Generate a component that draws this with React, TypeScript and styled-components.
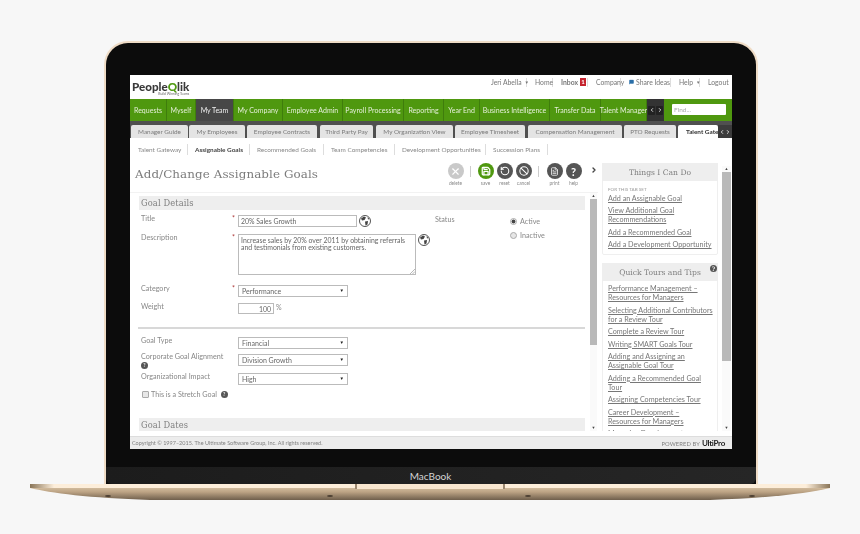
import React from "react";
import styled, { createGlobalStyle } from "styled-components";
import { X, RotateCcw, Ban, FileText, ChevronRight, ChevronLeft, MessageSquare, Save } from "lucide-react";

const Global = createGlobalStyle`
  html, body { margin: 0; padding: 0; background: #f7f7f7; }
  body { font-family: "Lato", "Open Sans", sans-serif; }
  * { box-sizing: border-box; }
`;

const Page = styled.div`
  width: 860px; height: 534px; overflow: hidden; background: #f7f7f7;
  display: flex; flex-direction: column; align-items: center; padding-top: 41px;
`;
const Lid = styled.div`
  width: 654px; height: 443px; margin-left: 1px; background: #0c0c0c;
  border: 2px solid #efdcc6; border-bottom: 0; border-radius: 24px 24px 0 0;
  display: flex; flex-direction: column; align-items: center; padding-top: 32px;
`;
const Screen = styled.div`
  width: 602px; height: 374px; margin-left: 1px; background: #fff; color: #777;
  display: flex; flex-direction: column; overflow: hidden; flex: none;
  filter: blur(0.35px);
`;
const Chin = styled.div`
  margin-top: 18px; width: 100%; flex: 1; display: flex; align-items: center; justify-content: center;
  background: linear-gradient(90deg, #1c1c1c, #262626); color: #d4d4d4; font-size: 10px;
  border-radius: 0 0 6px 6px;
`;
const Base = styled.svg`
  display: block; flex: none; margin-top: 0;
`;

const Header = styled.header`
  height: 24px; flex: none; display: flex; align-items: center; justify-content: space-between; padding: 0 3px 0 2px;
`;
const Logo = styled.div`
  display: flex; flex-direction: column; align-items: flex-end; color: #3a3a3a; font-weight: 900; font-size: 11.6px; line-height: 10px; padding-top: 3px;
  small { font-size: 3.4px; line-height: 4px; font-weight: 400; color: #666; }
  b { color: #4f9a12; font-weight: 900; }
`;
const TopMenu = styled.nav`
  display: flex; align-items: center; font-size: 6.8px; color: #777; margin-top: -10px;
`;
const TopItem = styled.span<{ $w: number; $bold?: boolean; $last?: boolean }>`
  width: ${p => p.$w}px; height: 9px; line-height: 9px; display: flex; align-items: center; gap: 2px; flex: none; white-space: nowrap;
  padding-left: 8px; font-weight: ${p => p.$bold ? 700 : 400};
  border-right: ${p => p.$last ? "0" : "1px solid #ddd"};
`;
const Badge = styled.span`
  background: #c5232e; color: #fff; font-size: 6px; width: 6px; height: 8px; line-height: 8px; text-align: center; font-weight: 700;
`;
const Caret = styled.i`
  font-style: normal; font-size: 4.5px; margin-left: 1px;
`;

const GreenNav = styled.nav`
  height: 22px; flex: none; background: #4f980f; display: flex; align-items: stretch; color: #e4efd8; font-size: 7px;
`;
const GreenItem = styled.a<{ $w: number; $active?: boolean }>`
  width: ${p => p.$w}px; flex: none; display: flex; align-items: center; justify-content: center; white-space: nowrap;
  border-right: 1px solid #3f7d0c; background: ${p => p.$active ? "#474747" : "transparent"};
  color: ${p => p.$active ? "#eee" : "inherit"};
`;
const ArrowPair = styled.div`
  flex: none; display: flex; align-items: center; justify-content: center; gap: 1px; background: #333; color: #fff;
`;
const NavArrows = styled(ArrowPair)`
  width: 17px;
`;
const ArrowCell = styled.span`
  width: 7px; height: 9px; background: #222; border-radius: 1px; display: flex; align-items: center; justify-content: center;
`;
const FindBox = styled.div`
  margin: 5px 0 0 8px; width: 54px; height: 11px; background: #fff; border-radius: 1px; color: #aaa; font-size: 6.5px; line-height: 11px; padding-left: 2px;
`;

const TabStrip = styled.div`
  height: 17px; flex: none; background: #505050; display: flex; align-items: flex-end; padding-left: 1px; overflow: hidden;
`;
const Tab = styled.a<{ $w: number; $gap: number; $active?: boolean }>`
  width: ${p => p.$w}px; margin-right: ${p => p.$gap}px; height: 13px; flex: none; display: flex; align-items: center;
  justify-content: ${p => p.$active ? "flex-start" : "center"}; padding-left: ${p => p.$active ? 8 : 0}px;
  white-space: nowrap; overflow: hidden; font-size: 6.4px; border-radius: 2px 2px 0 0;
  background: ${p => p.$active ? "#fff" : "#e4e4e4"}; color: ${p => p.$active ? "#333" : "#7a7a7a"}; font-weight: ${p => p.$active ? 700 : 400};
`;
const TabArrows = styled(ArrowPair)`
  width: 14px; height: 13px; margin-left: auto; gap: 0; background: #3c3c3c;
`;

const SubNav = styled.nav`
  height: 22px; flex: none; display: flex; align-items: center; font-size: 6.4px; color: #888; padding-left: 8px;
`;
const SubItem = styled.a<{ $w: number; $bold?: boolean }>`
  width: ${p => p.$w}px; flex: none; white-space: nowrap; height: 11px; line-height: 11px;
  border-right: 1px solid #ddd; font-weight: ${p => p.$bold ? 700 : 400}; color: ${p => p.$bold ? "#444" : "#888"};
  & + & { margin-left: 7px; }
`;

const Body = styled.div`
  flex: 1; min-height: 0; display: flex;
`;
const Main = styled.main`
  width: 468px; flex: none; display: flex; flex-direction: column; min-height: 0;
`;
const TitleRow = styled.div`
  height: 33px; flex: none; display: flex; align-items: flex-start; justify-content: space-between; padding: 3px 0 0 5px; border-bottom: 1px solid #f2f2f2;
`;
const PageTitle = styled.h1`
  margin: 4px 0 0; font: 400 11.9px "DejaVu Serif", serif; letter-spacing: 0.09px; color: #7c7c7c;
`;
const Toolbar = styled.div`
  display: flex; align-items: flex-start;
`;
const ToolBtn = styled.div<{ $ml?: number }>`
  width: 19px; margin-left: ${p => p.$ml || 0}px; display: flex; flex-direction: column; align-items: center; font-size: 4.8px; color: #888; gap: 1px;
`;
const ToolCircle = styled.span<{ $c: string }>`
  width: 16px; height: 16px; border-radius: 50%; background: ${p => p.$c}; color: #fff; display: flex; align-items: center; justify-content: center; font-weight: 700; font-size: 11px;
`;
const ToolSep = styled.span`
  width: 1px; height: 11px; background: #ccc; margin: 3px 0 0 5px;
`;
const MoreArrow = styled.span`
  width: 8px; margin: 3px 0 0 7px; color: #444; display: flex;
`;

const FormWrap = styled.div`
  flex: 1; min-height: 0; display: flex; padding-right: 1px;
`;
const Form = styled.div`
  flex: 1; min-height: 0; overflow: hidden; padding: 3px 5px 0 9px;
`;
const SectionBar = styled.div`
  height: 14px; background: #eeeeee; font: 400 8.3px "DejaVu Serif", serif; color: #808080; line-height: 14px; padding-left: 2px; letter-spacing: .12px;
`;
const TwoCols = styled.div`
  display: flex;
`;
const Fields = styled.div`
  width: 296px; flex: none; padding-top: 4px;
`;
const StatusCol = styled.div`
  display: flex; padding: 5px 0 0 0; flex: 1;
`;
const StatusLabel = styled.span`
  width: 75px; font-size: 7.2px; color: #888;
`;
const RadioGroup = styled.div`
  display: flex; flex-direction: column; gap: 6px; padding-top: 2px;
`;
const RadioRow = styled.label`
  display: flex; align-items: center; gap: 3px; font-size: 7.2px; color: #888; height: 8px;
`;
const Radio = styled.span<{ $on?: boolean }>`
  width: 7px; height: 7px; border-radius: 50%; border: 1px solid #aaa; background: ${p => p.$on ? "radial-gradient(circle, #444 0 1.7px, #eee 2.2px)" : "#e6e6e6"};
`;
const FieldRow = styled.div<{ $mt: number }>`
  display: flex; align-items: flex-start; margin-top: ${p => p.$mt}px; position: relative;
`;
const FieldLabel = styled.div<{ $up?: number }>`
  width: 93px; flex: none; font-size: 7.2px; color: #888; padding-left: 2px; line-height: 8px; margin-top: ${p => -(p.$up || 0)}px;
`;
const Star = styled.span`
  width: 6px; flex: none; color: #a33; font-size: 7px; line-height: 7px;
`;
const TextBox = styled.div<{ $w: number; $h: number; $right?: boolean }>`
  width: ${p => p.$w}px; height: ${p => p.$h}px; flex: none; border: 1px solid #bbb; font-size: 6.9px; line-height: 7px; color: #666;
  padding: 2px 2px; text-align: ${p => p.$right ? "right" : "left"}; position: relative;
`;
const Grip = styled.svg`
  position: absolute; right: 0; bottom: 0;
`;
const SelectBox = styled.div`
  width: 110px; height: 12px; flex: none; border: 1px solid #bbb; font-size: 7px; color: #666; line-height: 10px; padding: 0 3px; display: flex; justify-content: space-between;
  &::after { content: "▼"; font-size: 4.5px; color: #222; }
`;
const Suffix = styled.span`
  font-size: 7px; margin-left: 2px; color: #888;
`;
const GlobeSvg = styled.svg`
  flex: none; margin-left: 2px;
`;
const Divider = styled.div`
  height: 2px; background: #d8d8d8; margin: 13px 0 0 -1px;
`;
const HelpDot = styled.span<{ $s?: number }>`
  display: inline-block; width: ${p => p.$s || 7}px; height: ${p => p.$s || 7}px; border-radius: 50%; background: #555; color: #eee; font-size: 5px; line-height: ${p => p.$s || 7}px; text-align: center; font-weight: 700; flex: none;
`;
const CheckRow = styled.label`
  display: flex; align-items: center; gap: 2px; font-size: 7.2px; color: #888; margin: 5px 0 0 3px; height: 9px;
`;
const CheckBox = styled.span`
  width: 7px; height: 7px; border: 1px solid #aaa; background: #e8e8e8; border-radius: 1px;
`;
const BottomBar = styled(SectionBar)`
  margin-top: 19px;
`;

const ScrollTrack = styled.div<{ $w: number }>`
  width: ${p => p.$w}px; flex: none; display: flex; flex-direction: column; align-items: stretch; color: #555; background: #fafafa;
`;
const ScrollArrow = styled.div`
  height: 6px; flex: none; text-align: center; font-size: 4px; line-height: 6px; color: #444;
`;
const Thumb = styled.div<{ $h: number }>`
  height: ${p => p.$h}px; background: #b9b9b9; flex: none;
`;
const Spacer = styled.div`
  flex: 1;
`;

const Side = styled.aside`
  width: 116px; flex: none; margin-left: 4px; display: flex; flex-direction: column; gap: 8px; overflow: hidden; padding-top: 3px;
`;
const Card = styled.section`
  border: 1px solid #efefef; border-radius: 2px; flex: none;
`;
const CardHead = styled.div`
  height: 18px; background: #eeeeee; font: 400 7.6px "DejaVu Serif", serif; color: #808080; display: flex; align-items: center; justify-content: center; position: relative; margin: -1px -1px 0;
`;
const CardHelp = styled(HelpDot)`
  position: absolute; right: 1px; top: 2px; font-size: 6px;
`;
const CardBody = styled.div<{ $pt: number; $pb: number; $gap: number }>`
  padding: ${p => p.$pt}px 3px ${p => p.$pb}px 5px; display: flex; flex-direction: column; gap: ${p => p.$gap}px;
`;
const Hint = styled.div`
  font-size: 4.6px; color: #999; margin-bottom: -1px;
`;
const SideLink = styled.a`
  font-size: 7.2px; line-height: 9.2px; color: #777; text-decoration: underline; display: block; white-space: nowrap;
`;
const OuterScroll = styled(ScrollTrack)`
  margin-left: 4px; margin-top: 6px;
`;

const Footer = styled.footer`
  height: 13px; flex: none; margin-top: 5px; background: #ececec; border-top: 1px solid #ddd; display: flex; align-items: center; justify-content: space-between; font-size: 5.5px; color: #808080; padding: 0 7px 0 2px;
`;
const Powered = styled.span`
  display: flex; align-items: baseline; gap: 2px; font-size: 5.8px; letter-spacing: .1px;
  b { font-size: 8px; color: #222; font-weight: 700; letter-spacing: -.3px; }
`;

const Globe = () => (
  <GlobeSvg width="12" height="12" viewBox="0 0 12 12">
    <circle cx="6" cy="6" r="5.5" fill="#fff" stroke="#555" />
    <path d="M2 3.5 5 1.5 7 2.5 5.5 5 3 5.5ZM6 6.5 9 6 8.5 9.5 6.5 10.5ZM8.5 2 10.5 4 9 4.5Z" fill="#444" />
  </GlobeSvg>
);

const navItems: [string, number, boolean?][] = [
  ["Requests", 37], ["Myself", 29], ["My Team", 38, true], ["My Company", 49], ["Employee Admin", 60],
  ["Payroll Processing", 61], ["Reporting", 40], ["Year End", 36], ["Business Intelligence", 70], ["Transfer Data", 51], ["Talent Manager", 46],
];
const tabs: [string, number, number][] = [
  ["Manager Guide", 57, 1], ["My Employees", 56, 2], ["Employee Contracts", 70, 3], ["Third Party Pay", 53, 3],
  ["My Organization View", 77, 2], ["Employee Timesheet", 70, 3], ["Compensation Management", 94, 2], ["PTO Requests", 52, 2],
];
const subs: [string, number, boolean?][] = [
  ["Talent Gateway", 50], ["Assignable Goals", 55, true], ["Recommended Goals", 67], ["Team Competencies", 64], ["Development Opportunities", 84], ["Succession Plans", 55],
];
const tips = [
  "Performance Management –\nResources for Managers", "Selecting Additional Contributors\nfor a Review Tour", "Complete a Review Tour", "Writing SMART Goals Tour",
  "Adding and Assigning an\nAssignable Goal Tour", "Adding a Recommended Goal\nTour", "Assigning Competencies Tour", "Career Development –\nResources for Managers", "Managing Development",
];
const canDo = ["Add an Assignable Goal", "View Additional Goal\nRecommendations", "Add a Recommended Goal", "Add a Development Opportunity"];

const Lines = ({ text }: { text: string }) => (
  <SideLink>{text.split("\n").map((t, i) => <React.Fragment key={i}>{i > 0 && <br />}{t}</React.Fragment>)}</SideLink>
);

export default function App() {
  return (
    <Page>
      <Global />
      <Lid>
        <Screen>
          <Header>
            <Logo>
              <span>People<b>Q</b>lik</span>
              <small>Build Winning Teams</small>
            </Logo>
            <TopMenu>
              <TopItem $w={44}>Jeri Abella <Caret>▼</Caret></TopItem>
              <TopItem $w={26}>Home</TopItem>
              <TopItem $w={35} $bold>Inbox <Badge>1</Badge></TopItem>
              <TopItem $w={33}>Company</TopItem>
              <TopItem $w={50}><MessageSquare size={6} fill="#2a6ea8" stroke="#2a6ea8" /> Share Ideas</TopItem>
              <TopItem $w={29}>Help <Caret>▼</Caret></TopItem>
              <TopItem $w={29} $last>Logout</TopItem>
            </TopMenu>
          </Header>
          <GreenNav>
            {navItems.map(([t, w, a]) => <GreenItem key={t} $w={w} $active={a}>{t}</GreenItem>)}
            <NavArrows>
              <ArrowCell><ChevronLeft size={6} strokeWidth={3} /></ArrowCell>
              <ArrowCell><ChevronRight size={6} strokeWidth={3} /></ArrowCell>
            </NavArrows>
            <FindBox>Find...</FindBox>
          </GreenNav>
          <TabStrip>
            {tabs.map(([t, w, g]) => <Tab key={t} $w={w} $gap={g}>{t}</Tab>)}
            <Tab $w={40} $gap={0} $active>Talent Gate</Tab>
            <TabArrows>
              <ChevronLeft size={6} strokeWidth={3} />
              <ChevronRight size={6} strokeWidth={3} />
            </TabArrows>
          </TabStrip>
          <SubNav>
            {subs.map(([t, w, b]) => <SubItem key={t} $w={w} $bold={b}>{t}</SubItem>)}
          </SubNav>
          <Body>
            <Main>
              <TitleRow>
                <PageTitle>Add/Change Assignable Goals</PageTitle>
                <Toolbar>
                  <ToolBtn><ToolCircle $c="#c9c9c9"><X size={11} strokeWidth={2.5} /></ToolCircle>delete</ToolBtn>
                  <ToolSep />
                  <ToolBtn $ml={5}><ToolCircle $c="#4f980f"><Save size={10} strokeWidth={3} /></ToolCircle>save</ToolBtn>
                  <ToolBtn><ToolCircle $c="#555"><RotateCcw size={10} strokeWidth={2.5} /></ToolCircle>reset</ToolBtn>
                  <ToolBtn><ToolCircle $c="#555"><Ban size={10} strokeWidth={2.5} /></ToolCircle>cancel</ToolBtn>
                  <ToolSep />
                  <ToolBtn $ml={6}><ToolCircle $c="#555"><FileText size={9} /></ToolCircle>print</ToolBtn>
                  <ToolBtn><ToolCircle $c="#555">?</ToolCircle>help</ToolBtn>
                  <MoreArrow><ChevronRight size={8} strokeWidth={4} /></MoreArrow>
                </Toolbar>
              </TitleRow>
              <FormWrap>
                <Form>
                  <SectionBar>Goal Details</SectionBar>
                  <TwoCols>
                    <Fields>
                      <FieldRow $mt={1}>
                        <FieldLabel>Title</FieldLabel><Star>*</Star>
                        <TextBox $w={119} $h={12}>20% Sales Growth</TextBox><Globe />
                      </FieldRow>
                      <FieldRow $mt={7}>
                        <FieldLabel>Description</FieldLabel><Star>*</Star>
                        <TextBox $w={178} $h={41}>
                          Increase sales by 20% over 2011 by obtaining referrals and testimonials from existing customers.
                          <Grip width="5" height="5" viewBox="0 0 5 5"><path d="M0 5 5 0M2.5 5 5 2.5" stroke="#999" strokeWidth=".7" /></Grip>
                        </TextBox><Globe />
                      </FieldRow>
                      <FieldRow $mt={10}>
                        <FieldLabel>Category</FieldLabel><Star>*</Star>
                        <SelectBox>Performance</SelectBox>
                      </FieldRow>
                      <FieldRow $mt={6}>
                        <FieldLabel>Weight</FieldLabel><Star />
                        <TextBox $w={36} $h={11} $right>100</TextBox><Suffix>%</Suffix>
                      </FieldRow>
                    </Fields>
                    <StatusCol>
                      <StatusLabel>Status</StatusLabel>
                      <RadioGroup>
                        <RadioRow><Radio $on /> Active</RadioRow>
                        <RadioRow><Radio /> Inactive</RadioRow>
                      </RadioGroup>
                    </StatusCol>
                  </TwoCols>
                  <Divider />
                  <FieldRow $mt={8}>
                    <FieldLabel>Goal Type</FieldLabel><Star />
                    <SelectBox>Financial</SelectBox>
                  </FieldRow>
                  <FieldRow $mt={5}>
                    <FieldLabel $up={1}>Corporate Goal Alignment<br /><HelpDot>?</HelpDot></FieldLabel><Star />
                    <SelectBox>Division Growth</SelectBox>
                  </FieldRow>
                  <FieldRow $mt={4}>
                    <FieldLabel>Organizational Impact</FieldLabel><Star />
                    <SelectBox>High</SelectBox>
                  </FieldRow>
                  <CheckRow><CheckBox /> This is a Stretch Goal&nbsp;<HelpDot>?</HelpDot></CheckRow>
                  <BottomBar>Goal Dates</BottomBar>
                </Form>
                <ScrollTrack $w={7}>
                  <ScrollArrow>▲</ScrollArrow>
                  <Thumb $h={146} />
                  <Spacer />
                  <ScrollArrow>▼</ScrollArrow>
                </ScrollTrack>
              </FormWrap>
            </Main>
            <Side>
              <Card>
                <CardHead>Things I Can Do</CardHead>
                <CardBody $pt={5} $pb={5} $gap={3}>
                  <Hint>FOR THIS TAB SET</Hint>
                  {canDo.map(t => <Lines key={t} text={t} />)}
                </CardBody>
              </Card>
              <Card>
                <CardHead>Quick Tours and Tips<CardHelp>?</CardHelp></CardHead>
                <CardBody $pt={3} $pb={0} $gap={3.2}>
                  {tips.map(t => <Lines key={t} text={t} />)}
                </CardBody>
              </Card>
            </Side>
            <OuterScroll $w={9}>
              <ScrollArrow>▲</ScrollArrow>
              <Thumb $h={189} />
              <Spacer />
              <ScrollArrow>▼</ScrollArrow>
            </OuterScroll>
          </Body>
          <Footer>
            <span>Copyright © 1997–2015. The Ultimate Software Group, Inc. All rights reserved.</span>
            <Powered>POWERED BY <b>UltiPro</b></Powered>
          </Footer>
        </Screen>
        <Chin>MacBook</Chin>
      </Lid>
      <Base width="800" height="17" viewBox="0 0 800 17">
        <defs>
          <linearGradient id="metal" x1="0" y1="0" x2="0" y2="1">
            <stop offset="0" stopColor="#e6d2b4" />
            <stop offset="0.5" stopColor="#bca384" />
            <stop offset="1" stopColor="#6f5f4c" />
          </linearGradient>
          <linearGradient id="edge" x1="0" y1="0" x2="1" y2="0">
            <stop offset="0" stopColor="#8a7558" />
            <stop offset="0.03" stopColor="#fdeeda" />
            <stop offset="0.97" stopColor="#fdeeda" />
            <stop offset="1" stopColor="#8a7558" />
          </linearGradient>
        </defs>
        <path d="M0 0H800V4C780 9 740 14 680 16H120C60 14 20 9 0 4Z" fill="url(#metal)" />
        <rect width="800" height="4" fill="url(#edge)" />
        <path d="M325 0H475V4C475 5 473 5 470 5H330C327 5 325 5 325 4Z" fill="#f8e6cf" />
        <rect x="325" width="2" height="5" fill="#9c8870" />
        <rect x="473" width="2" height="5" fill="#9c8870" />
        <ellipse cx="78" cy="12" rx="3" ry="1" fill="#4d4033" />
        <ellipse cx="300" cy="12" rx="3" ry="1" fill="#4d4033" />
        <ellipse cx="498" cy="12" rx="3" ry="1" fill="#4d4033" />
        <ellipse cx="722" cy="12" rx="3" ry="1" fill="#4d4033" />
      </Base>
    </Page>
  );
}
